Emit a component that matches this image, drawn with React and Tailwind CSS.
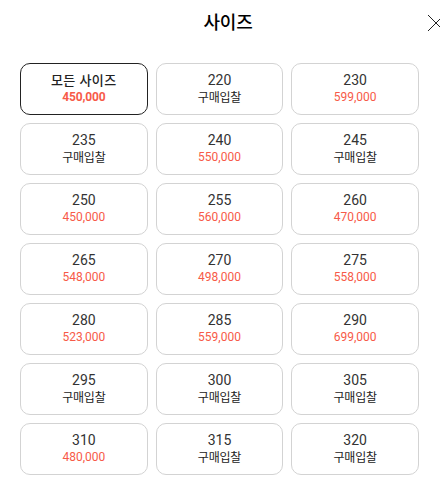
const BID = "구매입찰";
const sizes = [
  ["모든 사이즈", "450,000"], ["220", BID], ["230", "599,000"],
  ["235", BID], ["240", "550,000"], ["245", BID],
  ["250", "450,000"], ["255", "560,000"], ["260", "470,000"],
  ["265", "548,000"], ["270", "498,000"], ["275", "558,000"],
  ["280", "523,000"], ["285", "559,000"], ["290", "699,000"],
  ["295", BID], ["300", BID], ["305", BID],
  ["310", "480,000"], ["315", BID], ["320", BID],
];

function SizeButton({ size, price, selected }) {
  const bid = price === BID;
  return (
    <button
      className={`flex h-[52px] flex-col items-center justify-center rounded-[10px] border pb-px ${
        selected ? "border-[#222222]" : "border-[#d3d3d3]"
      }`}
    >
      <span className={`leading-[17px] ${selected ? "text-[13px] font-medium tracking-[0.45px] text-[#222222]" : "text-[14px] text-[#333333]"}`}>
        {size}
      </span>
      <span
        className={`text-[12px] ${
          bid ? "pt-px leading-4 tracking-[-0.2px] text-[#222222]" : "leading-[17px] text-[#f75a48]"
        } ${selected ? "font-bold tracking-[-0.15px]" : ""}`}
      >
        {price}
      </span>
    </button>
  );
}

export default function App() {
  return (
    <div className="h-[492px] w-[440px] overflow-hidden bg-white font-[Roboto,'Noto_Sans_CJK_KR',sans-serif]">
      <header className="grid h-[63px] grid-cols-[1fr_auto_1fr] items-start pl-4">
        <h2 className="col-start-2 pt-[10px] text-[18px] leading-[26px] font-medium tracking-[-0.3px] text-black">사이즈</h2>
        <button aria-label="닫기" className="mt-[15px] -mr-1 justify-self-end">
          <svg width="16" height="16" viewBox="0 0 16 16" fill="none" stroke="#222222">
            <path d="M0 0l16 16M16 0L0 16" />
          </svg>
        </button>
      </header>
      <main className="grid grid-cols-3 gap-2 pr-[21px] pl-5">
        {sizes.map(([size, price], i) => (
          <SizeButton key={size} size={size} price={price} selected={i === 0} />
        ))}
      </main>
    </div>
  );
}
